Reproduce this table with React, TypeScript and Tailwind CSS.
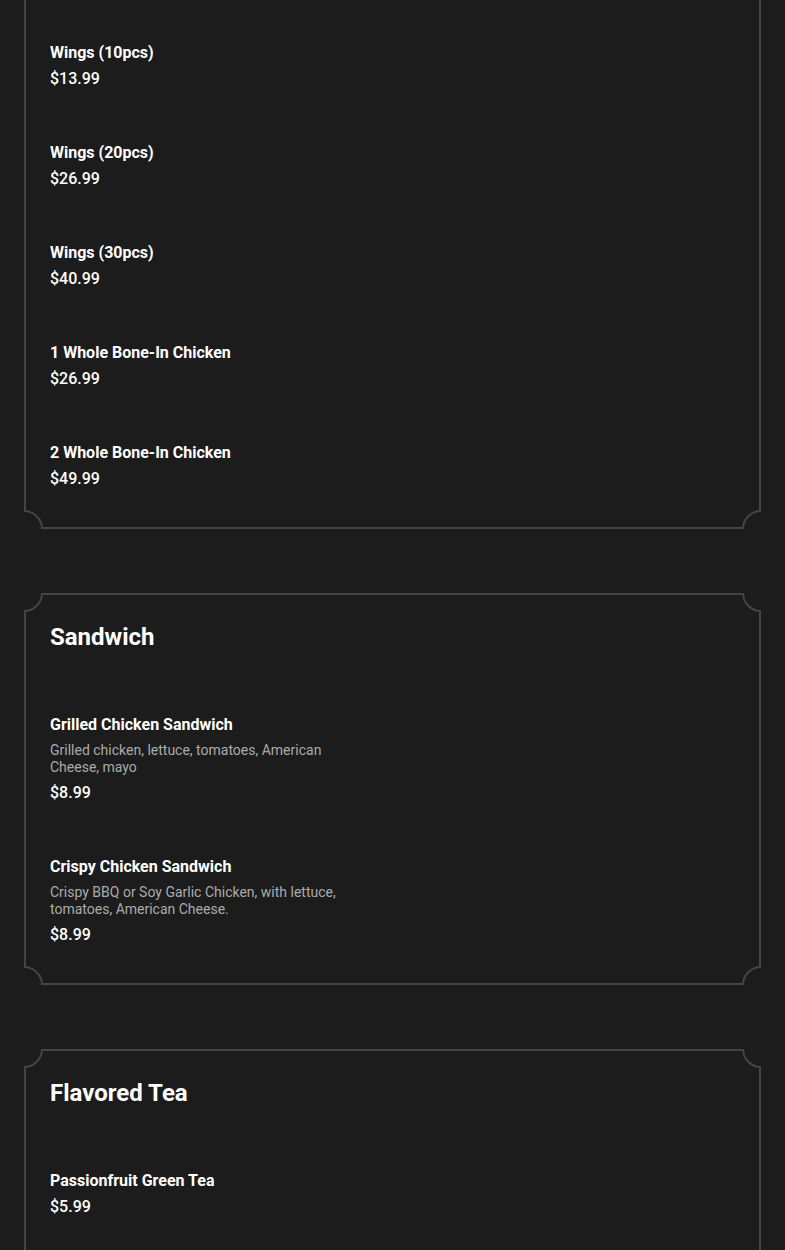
const FONT = { fontFamily: "Roboto, 'Liberation Sans', sans-serif" };

type Item = { name: string; price: string; desc?: string };

const SECTIONS: { title?: string; items: Item[] }[] = [
  {
    items: [
      { name: "Wings (10pcs)", price: "$13.99" },
      { name: "Wings (20pcs)", price: "$26.99" },
      { name: "Wings (30pcs)", price: "$40.99" },
      { name: "1 Whole Bone-In Chicken", price: "$26.99" },
      { name: "2 Whole Bone-In Chicken", price: "$49.99" },
    ],
  },
  {
    title: "Sandwich",
    items: [
      {
        name: "Grilled Chicken Sandwich",
        desc: "Grilled chicken, lettuce, tomatoes, American Cheese, mayo",
        price: "$8.99",
      },
      {
        name: "Crispy Chicken Sandwich",
        desc: "Crispy BBQ or Soy Garlic Chicken, with lettuce, tomatoes, American Cheese.",
        price: "$8.99",
      },
    ],
  },
  {
    title: "Flavored Tea",
    items: [{ name: "Passionfruit Green Tea", price: "$5.99" }],
  },
];

// scooped corner: page-coloured square with a ring quarter cut into it
function Corner({ pos }: { pos: "tl" | "tr" | "bl" | "br" }) {
  const box = {
    tl: "-top-[2px] -left-[2px]",
    tr: "-top-[2px] -right-[2px]",
    bl: "-bottom-[2px] -left-[2px]",
    br: "-bottom-[2px] -right-[2px]",
  }[pos];
  const ring = {
    tl: "-top-[19px] -left-[19px]",
    tr: "-top-[19px] -right-[19px]",
    bl: "-bottom-[19px] -left-[19px]",
    br: "-bottom-[19px] -right-[19px]",
  }[pos];
  return (
    <div className={`absolute ${box} h-[19px] w-[19px] overflow-hidden bg-[#1c1c1c]`}>
      <div className={`absolute ${ring} h-[38px] w-[38px] rounded-full border-2 border-[#454545]`} />
    </div>
  );
}

function MenuItem({ item }: { item: Item }) {
  return (
    <div className="flex flex-col gap-[2px] py-[25px]">
      <div className="text-[16px] font-bold leading-6 text-white">{item.name}</div>
      {item.desc && (
        <div className="my-[3px] max-w-[300px] text-[14px] leading-[17px] text-[#ababab]">
          {item.desc}
        </div>
      )}
      <div className="text-[16px] font-medium leading-6 text-white">{item.price}</div>
    </div>
  );
}

export default function App() {
  return (
    <div className="min-h-[1250px] overflow-hidden bg-[#1c1c1c] px-[24px]" style={FONT}>
      <div className="-mt-[39px] flex flex-col gap-[64px]">
        {SECTIONS.map((s, i) => (
          <div
            key={i}
            className={`relative border-2 border-[#454545] px-[24px] ${
              s.title ? "pt-[26px]" : "pt-[53px]"
            } ${i === SECTIONS.length - 1 ? "pb-[80px]" : "pb-[11px]"}`}
          >
            <Corner pos="tl" />
            <Corner pos="tr" />
            <Corner pos="bl" />
            <Corner pos="br" />
            {s.title && (
              <h2 className="mb-[35px] text-[24px] font-bold leading-8 text-white">{s.title}</h2>
            )}
            {s.items.map((it) => (
              <MenuItem key={it.name} item={it} />
            ))}
          </div>
        ))}
      </div>
    </div>
  );
}
